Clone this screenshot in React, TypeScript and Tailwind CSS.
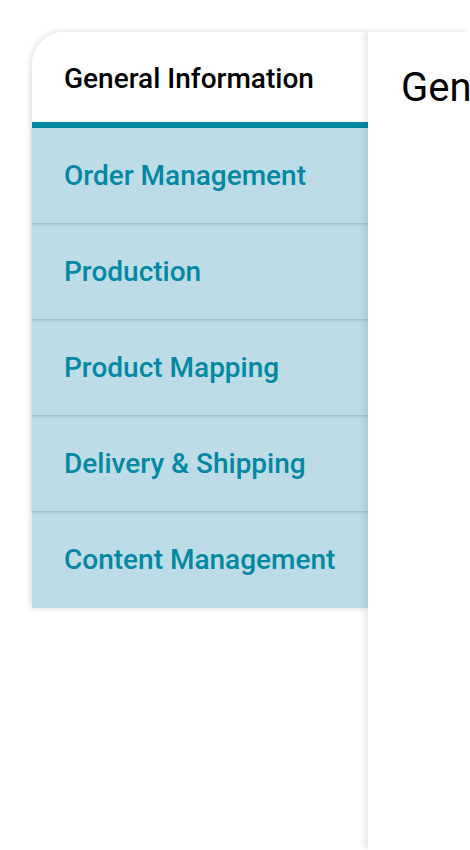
import React from "react";

const items = [
  "Order Management",
  "Production",
  "Product Mapping",
  "Delivery & Shipping",
  "Content Management",
];

export default function App() {
  return (
    <div
      className="min-h-screen bg-white pt-8 pl-8 overflow-hidden"
      style={{ fontFamily: "Roboto, 'Noto Sans', sans-serif" }}
    >
      <div className="flex items-start">
        <div className="w-[336px] shrink-0 rounded-tl-[32px] shadow-[-1px_0px_6px_rgba(0,0,0,0.16)] relative z-0">
          <div className="h-[96px] bg-white rounded-tl-[32px] border-b-[6px] border-[#0088a3] flex items-center pl-8 pt-1">
            <span className="text-[28px] font-medium text-black leading-none">General Information</span>
          </div>
          {items.map((label, i) => (
            <div
              key={label}
              className={`h-[96px] bg-[#bedce5] flex items-center pl-8 relative ${
                i < items.length - 1
                  ? "border-b border-[#a6c4cd] shadow-[0_1px_3px_rgba(0,0,0,0.12)]"
                  : ""
              }`}
              style={{ zIndex: items.length - i }}
            >
              <span className="text-[28px] font-medium text-[#0088a3] leading-none">{label}</span>
            </div>
          ))}
        </div>
        <div className="flex-1 min-w-0 h-[818px] bg-white relative z-10 shadow-[-3px_-1px_6px_rgba(0,0,0,0.1)] pl-[33px] pt-8 overflow-hidden">
          <div className="text-[40px] leading-[48px] text-black whitespace-nowrap">General Information</div>
        </div>
      </div>
    </div>
  );
}
